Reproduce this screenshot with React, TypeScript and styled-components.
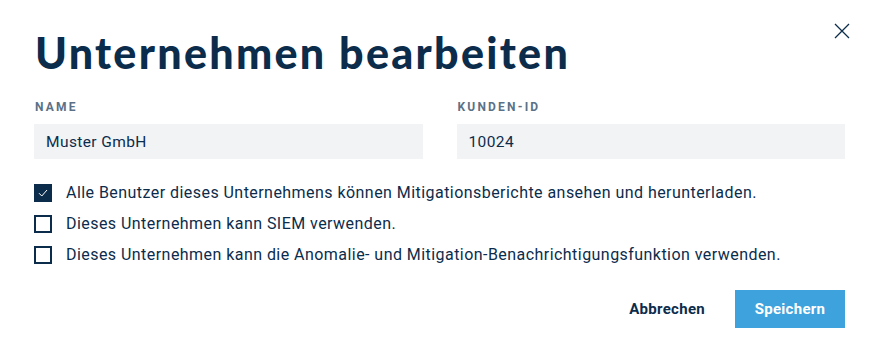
import React, { useState } from 'react';
import styled, { createGlobalStyle } from 'styled-components';

const GlobalStyle = createGlobalStyle`
  html, body {
    margin: 0;
    padding: 0;
    background: #ffffff;
  }
  body {
    font-family: Roboto, 'Open Sans', sans-serif;
    color: #0c2c4c;
  }
`;

const options = [
  'Alle Benutzer dieses Unternehmens können Mitigationsberichte ansehen und herunterladen.',
  'Dieses Unternehmen kann SIEM verwenden.',
  'Dieses Unternehmen kann die Anomalie- und Mitigation-Benachrichtigungsfunktion verwenden.',
];

const App = () => {
  const [checked, setChecked] = useState([true, false, false]);

  const toggle = (i: number) => {
    setChecked((prev) => prev.map((v, idx) => (idx === i ? !v : v)));
  };

  return (
    <>
      <GlobalStyle />
      <Dialog>
        <CloseButton aria-label="Schließen">
          <svg width="16" height="16" viewBox="0 0 16 16">
            <path d="M1 1L15 15M15 1L1 15" stroke="#0c2c4c" strokeWidth="1.3" />
          </svg>
        </CloseButton>
        <Title>Unternehmen bearbeiten</Title>
        <Fields>
          <Field>
            <Label>Name</Label>
            <Input defaultValue="Muster GmbH" />
          </Field>
          <Field>
            <Label>Kunden-ID</Label>
            <Input defaultValue="10024" />
          </Field>
        </Fields>
        <Options>
          {options.map((text, i) => (
            <Option key={i} onClick={() => toggle(i)}>
              <Box $checked={checked[i]}>
                {checked[i] && (
                  <svg width="10" height="8" viewBox="0 0 10 8">
                    <path d="M1 4.2L3.8 7L9 1" stroke="#ffffff" strokeWidth="1" fill="none" />
                  </svg>
                )}
              </Box>
              <span>{text}</span>
            </Option>
          ))}
        </Options>
        <Actions>
          <TextButton>Abbrechen</TextButton>
          <PrimaryButton>Speichern</PrimaryButton>
        </Actions>
      </Dialog>
    </>
  );
};

const Dialog = styled.div`
  position: relative;
  width: 879px;
  height: 358px;
  box-sizing: border-box;
  padding: 28px 34px 0 34px;
  background: #ffffff;
`;

const CloseButton = styled.button`
  position: absolute;
  top: 23px;
  right: 29px;
  border: none;
  background: none;
  padding: 0;
  cursor: pointer;
  display: flex;
`;

const Title = styled.h1`
  margin: 0 0 0 1px;
  font-family: Lato, 'Noto Sans', sans-serif;
  font-weight: 900;
  font-size: 43px;
  line-height: 50px;
  color: #0c2c4c;
  letter-spacing: 2.3px;
`;

const Fields = styled.div`
  display: grid;
  grid-template-columns: 1fr 1fr;
  column-gap: 34px;
  margin-top: 22px;
`;

const Field = styled.label`
  display: flex;
  flex-direction: column;
  gap: 10px;
`;

const Label = styled.span`
  font-family: Roboto, sans-serif;
  font-size: 12px;
  font-weight: 700;
  line-height: 14px;
  letter-spacing: 2.2px;
  text-transform: uppercase;
  color: #5b7187;
  padding-left: 1px;
`;

const Input = styled.input`
  height: 35px;
  box-sizing: border-box;
  border: none;
  outline: none;
  background: #f2f3f5;
  padding: 0 12px;
  font-family: Roboto, sans-serif;
  font-size: 15.5px;
  letter-spacing: 0.4px;
  color: #0c2c4c;
`;

const Options = styled.div`
  display: flex;
  flex-direction: column;
  gap: 12px;
  margin-top: 24px;
`;

const Option = styled.label`
  display: flex;
  align-items: center;
  gap: 14px;
  font-size: 16px;
  line-height: 19px;
  letter-spacing: 0.45px;
  color: #0c2c4c;
  cursor: pointer;
`;

const Box = styled.span<{ $checked: boolean }>`
  width: 18px;
  height: 18px;
  box-sizing: border-box;
  border: 2px solid #0c2c4c;
  background: ${(p) => (p.$checked ? '#0c2c4c' : '#ffffff')};
  display: flex;
  align-items: center;
  justify-content: center;
  flex-shrink: 0;
`;

const Actions = styled.div`
  display: flex;
  justify-content: flex-end;
  align-items: center;
  gap: 30px;
  margin-top: 26px;
`;

const TextButton = styled.button`
  border: none;
  background: none;
  padding: 0;
  font-family: Roboto, sans-serif;
  font-weight: 700;
  font-size: 15px;
  letter-spacing: 0.3px;
  color: #0c2c4c;
  cursor: pointer;
`;

const PrimaryButton = styled.button`
  width: 110px;
  height: 38px;
  border: none;
  background: #3ea3dc;
  color: #ffffff;
  font-family: Roboto, sans-serif;
  font-weight: 700;
  font-size: 15px;
  letter-spacing: 0.3px;
  cursor: pointer;
`;

export default App;
